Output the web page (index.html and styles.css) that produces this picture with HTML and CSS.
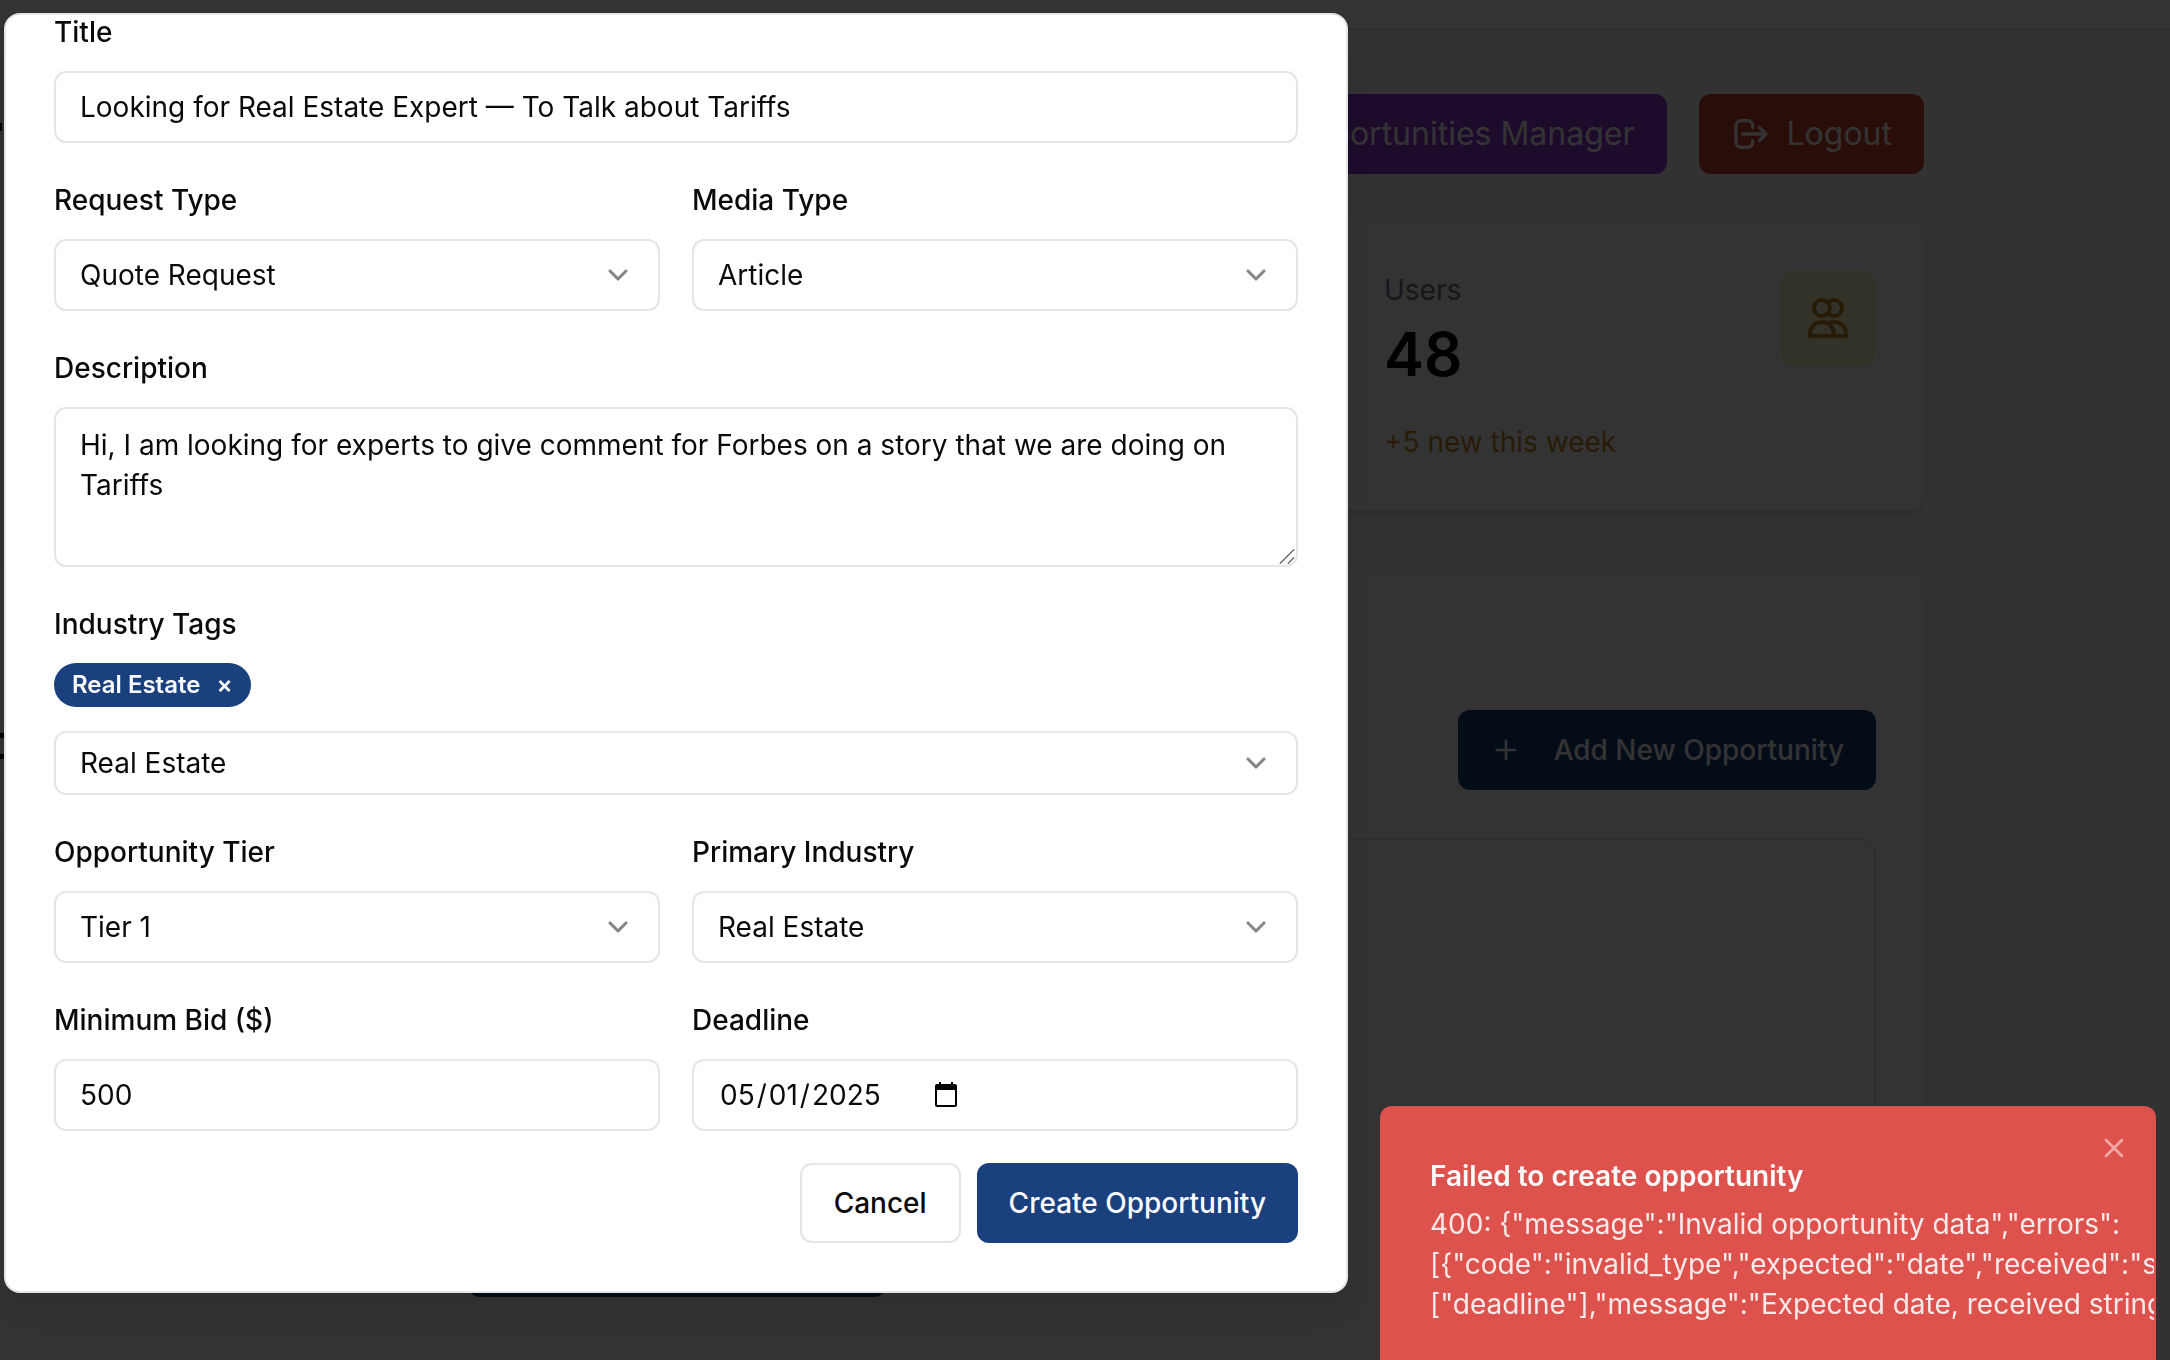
FILE: index.html
```
<!DOCTYPE html>
<html lang="en">
<head>
<meta charset="utf-8">
<title>Opportunities Manager</title>
<link rel="stylesheet" href="styles.css">
</head>
<body>
<div class="page">
  <header class="topbar"></header>
  <main class="main">
    <div class="actions">
      <button class="btn btn-purple">Opportunities Manager</button>
      <button class="btn btn-red">
        <svg class="ico-logout" viewBox="0 0 24 24"><path d="M17 16l4-4m0 0l-4-4m4 4H7m6 4v1a3 3 0 01-3 3H6a3 3 0 01-3-3V7a3 3 0 013-3h4a3 3 0 013 3v1"/></svg>
        Logout
      </button>
    </div>
    <section class="stat">
      <div class="stat-text">
        <span class="stat-label">Users</span>
        <strong class="stat-value">48</strong>
        <span class="stat-note">+5 new this week</span>
      </div>
      <div class="stat-icon">
        <svg viewBox="0 0 24 24"><path d="M12 4.354a4 4 0 110 5.292M15 21H3v-1a6 6 0 0112 0v1zm0 0h6v-1a6 6 0 00-9-5.197M13 7a4 4 0 11-8 0 4 4 0 018 0z"/></svg>
      </div>
    </section>
    <section class="panel">
      <button class="btn btn-navy">
        <svg class="ico-plus" viewBox="0 0 24 24"><path d="M5 12h14M12 5v14"/></svg>
        Add New Opportunity
      </button>
      <div class="table-box"><span class="empty-action"></span></div>
    </section>
  </main>
  <span class="edge edge-heading"></span>
  <span class="edge edge-upper"></span>
  <span class="edge edge-lower"></span>
</div>
<div class="overlay"></div>

<div class="dialog" role="dialog">
  <form class="form">
    <div class="field">
      <label class="label">Title</label>
      <div class="control">Looking for Real Estate Expert — To Talk about Tariffs</div>
    </div>
    <div class="row">
      <div class="field">
        <label class="label">Request Type</label>
        <div class="control">Quote Request<svg class="chevron" viewBox="0 0 24 24"><path d="m6 9 6 6 6-6"/></svg></div>
      </div>
      <div class="field">
        <label class="label">Media Type</label>
        <div class="control">Article<svg class="chevron" viewBox="0 0 24 24"><path d="m6 9 6 6 6-6"/></svg></div>
      </div>
    </div>
    <div class="field">
      <label class="label">Description</label>
      <div class="control textarea">Hi, I am looking for experts to give comment for Forbes on a story that we are doing on Tariffs<svg class="grip" viewBox="0 0 18 18"><path d="M1 17 17 1M10 17l7-7"/></svg></div>
    </div>
    <div class="field">
      <label class="label">Industry Tags</label>
      <div class="tags"><span class="tag">Real Estate<span class="tag-x">×</span></span></div>
      <div class="control compact">Real Estate<svg class="chevron" viewBox="0 0 24 24"><path d="m6 9 6 6 6-6"/></svg></div>
    </div>
    <div class="row">
      <div class="field">
        <label class="label">Opportunity Tier</label>
        <div class="control">Tier 1<svg class="chevron" viewBox="0 0 24 24"><path d="m6 9 6 6 6-6"/></svg></div>
      </div>
      <div class="field">
        <label class="label">Primary Industry</label>
        <div class="control">Real Estate<svg class="chevron" viewBox="0 0 24 24"><path d="m6 9 6 6 6-6"/></svg></div>
      </div>
    </div>
    <div class="row">
      <div class="field">
        <label class="label">Minimum Bid ($)</label>
        <div class="control">500</div>
      </div>
      <div class="field">
        <label class="label">Deadline</label>
        <div class="control date"><span class="date-part">05</span>/<span class="date-part">01</span>/<span class="date-part">2025</span><svg class="calendar" viewBox="0 0 24 26"><path d="M5 0h2v2h10V0h2v2h2a2 2 0 0 1 2 2v19a2 2 0 0 1-2 2H3a2 2 0 0 1-2-2V4a2 2 0 0 1 2-2h2ZM3 8v15h18V8Z" fill-rule="evenodd"/></svg></div>
      </div>
    </div>
    <div class="footer">
      <button type="button" class="btn btn-outline">Cancel</button>
      <button type="button" class="btn btn-primary">Create Opportunity</button>
    </div>
  </form>
</div>

<div class="toast" role="alert">
  <svg class="toast-close" viewBox="0 0 24 24"><path d="M18 6 6 18M6 6l12 12"/></svg>
  <div class="toast-title">Failed to create opportunity</div>
  <div class="toast-body">400: {"message":"Invalid opportunity data","errors":<br>[{"code":"invalid_type","expected":"date","received":"string","path":<br>["deadline"],"message":"Expected date, received string"}]}</div>
</div>
</body>
</html>
```
FILE: styles.css
```
* { box-sizing: border-box; }
body { margin: 0; height: 1360px; overflow: hidden; font-family: Inter, sans-serif; font-size: 28px; line-height: 40px; color: #0a0a0a; background: #f9fafb; }
.page { position: relative; height: 1360px; overflow: hidden; }
.topbar { height: 30px; background: #fff; border-bottom: 2px solid #e5e7eb; }
.main { width: 2494px; margin-left: -570px; padding-top: 64px; }
.actions { display: flex; justify-content: flex-end; gap: 32px; }
.btn { display: flex; flex: none; align-items: center; justify-content: center; height: 80px; margin: 0; padding: 0 32px; border: 0; border-radius: 12px; font: 500 28px/40px Inter, sans-serif; white-space: nowrap; }
.btn-purple, .btn-red { font-weight: 400; font-size: 32px; color: #fff; }
.btn-purple { background: #8a38d8; }
.btn-red { gap: 16px; background: #c8412f; }
.ico-logout { width: 40px; height: 40px; fill: none; stroke: currentColor; stroke-width: 2; stroke-linecap: round; stroke-linejoin: round; }
.stat { display: flex; justify-content: space-between; height: 288px; margin: 48px 0 0 1906px; padding: 48px; border-radius: 16px; background: #fff; box-shadow: 0 8px 12px -2px rgba(0,0,0,.1), 0 4px 8px -4px rgba(0,0,0,.1); }
.stat-text { display: flex; flex-direction: column; }
.stat-label { color: #6b7280; }
.stat-value { margin-top: 8px; font-size: 60px; line-height: 72px; font-weight: 600; color: #000; }
.stat-note { margin-top: 32px; color: #c4882a; }
.stat-icon { display: flex; align-items: center; justify-content: center; width: 96px; height: 96px; border-radius: 16px; background: #fbf9cd; color: #c4882a; }
.stat-icon svg { width: 48px; height: 48px; fill: none; stroke: currentColor; stroke-width: 2; stroke-linecap: round; stroke-linejoin: round; }
.panel { display: flex; flex-direction: column; align-items: flex-end; height: 900px; margin-top: 64px; padding: 136px 48px 0; border-radius: 16px; background: #fff; box-shadow: 0 8px 12px -2px rgba(0,0,0,.1); }
.btn-navy { background: #153c74; color: #fff; }
.ico-plus { width: 32px; height: 32px; margin-right: 32px; fill: none; stroke: currentColor; stroke-width: 2; stroke-linecap: round; }
.table-box { display: flex; justify-content: center; align-items: flex-end; width: 100%; height: 556px; margin-top: 48px; padding-bottom: 95px; border: 2px solid #e5e7eb; border-radius: 16px; }
.empty-action { width: 418px; height: 80px; border-radius: 12px; background: #153c74; }
.edge { position: absolute; left: 0; background: #000; }
.edge-heading { top: 123px; width: 2px; height: 8px; }
.edge-upper { top: 733px; width: 4px; height: 5px; }
.edge-lower { top: 754px; width: 4px; height: 5px; }
.overlay { position: fixed; inset: 0; background: rgba(0,0,0,.8); }

.dialog { position: absolute; left: 4px; top: 13px; width: 1344px; height: 1280px; overflow: hidden; padding: 0 48px; border: 2px solid #e5e5e5; border-radius: 16px; background: #fff; box-shadow: 0 20px 30px -6px rgba(0,0,0,.1); }
.form { display: flex; flex-direction: column; gap: 32px; margin-top: -8px; }
.row { display: grid; grid-template-columns: 1fr 1fr; gap: 32px; }
.field { display: flex; flex-direction: column; }
.label { height: 48px; margin-bottom: 16px; font-weight: 500; line-height: 51px; }
.control { display: flex; align-items: center; justify-content: space-between; height: 72px; padding: 0 24px; border: 2px solid #e5e5e5; border-radius: 12px; white-space: nowrap; }
.chevron { width: 32px; height: 32px; fill: none; stroke: #858585; stroke-width: 2.3; stroke-linecap: round; stroke-linejoin: round; }
.textarea { position: relative; display: block; height: 160px; padding: 16px 24px; white-space: normal; }
.grip { position: absolute; right: 1px; bottom: 0; width: 16px; height: 17px; fill: none; stroke: #555; stroke-width: 1.5; }
.tags { display: flex; margin-bottom: 24px; }
.tag { display: flex; align-items: center; height: 44px; padding: 0 18px; border-radius: 22px; background: #1a407e; color: #fafafa; font-size: 24px; line-height: 32px; font-weight: 600; }
.tag-x { margin-left: 16px; }
.compact { height: 64px; }
.date { justify-content: flex-start; }
.date-part { padding: 0 2px; }
.calendar { width: 24px; height: 26px; margin: -1px 0 0 51px; }
.footer { display: flex; justify-content: flex-end; gap: 16px; }
.btn-outline { border: 2px solid #e5e5e5; background: #fff; color: #0a0a0a; }
.btn-primary { background: #1a407e; color: #fafafa; }

.toast { position: absolute; left: 1380px; top: 1106px; width: 776px; height: 254px; overflow: hidden; padding: 48px 0 0 48px; border: 2px solid #dd524c; border-bottom: 0; border-radius: 12px 12px 0 0; background: #dd524c; color: #fafafa; white-space: nowrap; }
.toast-title { font-weight: 600; }
.toast-body { margin-top: 8px; opacity: .9; }
.toast-close { position: absolute; right: 24px; top: 24px; width: 32px; height: 32px; fill: none; stroke: #f1a7a4; stroke-width: 2; stroke-linecap: round; }
```
